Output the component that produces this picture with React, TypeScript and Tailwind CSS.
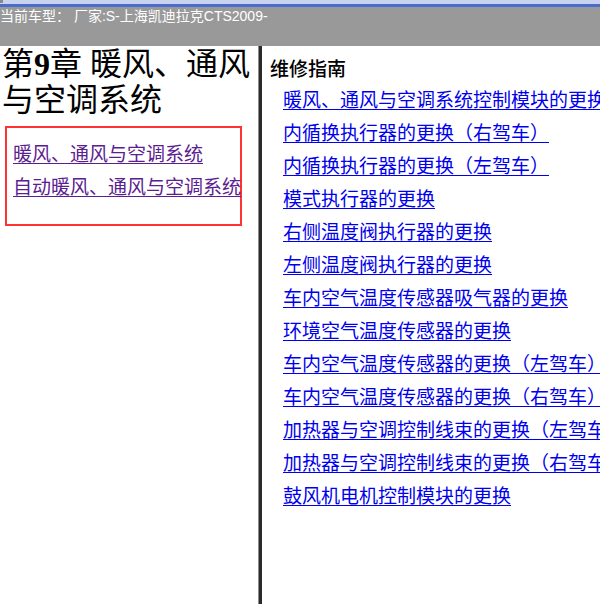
const rightLinks = [
  "暖风、通风与空调系统控制模块的更换",
  "内循换执行器的更换（右驾车）",
  "内循换执行器的更换（左驾车）",
  "模式执行器的更换",
  "右侧温度阀执行器的更换",
  "左侧温度阀执行器的更换",
  "车内空气温度传感器吸气器的更换",
  "环境空气温度传感器的更换",
  "车内空气温度传感器的更换（左驾车）",
  "车内空气温度传感器的更换（右驾车）",
  "加热器与空调控制线束的更换（左驾车）",
  "加热器与空调控制线束的更换（右驾车）",
  "鼓风机电机控制模块的更换",
]

const serif = "font-['Liberation_Serif','Noto_Sans_CJK_SC',serif]"

export default function App() {
  return (
    <div className="w-[600px] h-[604px] flex flex-col overflow-hidden bg-white">
      {/* header bar */}
      <div className="h-[46px] shrink-0 bg-[#999999] flex flex-col">
        <div className="h-[4px] bg-[#c9d3f1] flex">
          <div className="w-[3px] h-[3px] bg-[#8a8a8a]" />
        </div>
        <div className="h-[3px] bg-[#4a6dcc]" />
        <div className="pt-[1px] text-[14px] leading-[16px] text-white whitespace-nowrap font-['Liberation_Sans','Noto_Sans_CJK_SC',sans-serif]">
          当前车型： 厂家:S-上海凯迪拉克CTS2009-
        </div>
      </div>

      <div className="flex flex-1 min-h-0">
        {/* left pane */}
        <div className="w-[258px] shrink-0 flex flex-col">
          <h1 className={`${serif} text-[32px] leading-[36px] text-black pl-[2px] font-normal`}>
            第<span className="font-bold">9</span>章 暖风、通风与空调系统
          </h1>
          <div className="mt-[8px] ml-[5px] w-[237px] h-[100px] border-2 border-[#ff3333] pl-[6px] pt-[16px] flex flex-col gap-[11px]">
            <a href="#" className={`${serif} text-[19px] leading-[22px] text-[#5b2090] underline underline-offset-2 whitespace-nowrap`}>
              暖风、通风与空调系统
            </a>
            <a href="#" className={`${serif} text-[19px] leading-[22px] text-[#5b2090] underline underline-offset-2 whitespace-nowrap`}>
              自动暖风、通风与空调系统
            </a>
          </div>
        </div>

        {/* divider */}
        <div className="w-[4px] shrink-0 flex">
          <div className="w-[1px] bg-[#8c8c8c]" />
          <div className="w-[3px] bg-[#2a2a2a]" />
        </div>

        {/* right pane */}
        <div className="flex-1 min-w-0 overflow-hidden pl-[8px] pt-[11px]">
          <div className="text-[19px] leading-[22px] text-black font-medium whitespace-nowrap font-['Noto_Sans_CJK_SC',sans-serif]">
            维修指南
          </div>
          <div className="pl-[13px] pt-[11px] flex flex-col gap-[11px]">
            {rightLinks.map((t) => (
              <a
                key={t}
                href="#"
                className={`${serif} text-[19px] leading-[22px] text-[#0000ee] underline underline-offset-2 whitespace-nowrap`}
              >
                {t}
              </a>
            ))}
          </div>
        </div>
      </div>
    </div>
  )
}
